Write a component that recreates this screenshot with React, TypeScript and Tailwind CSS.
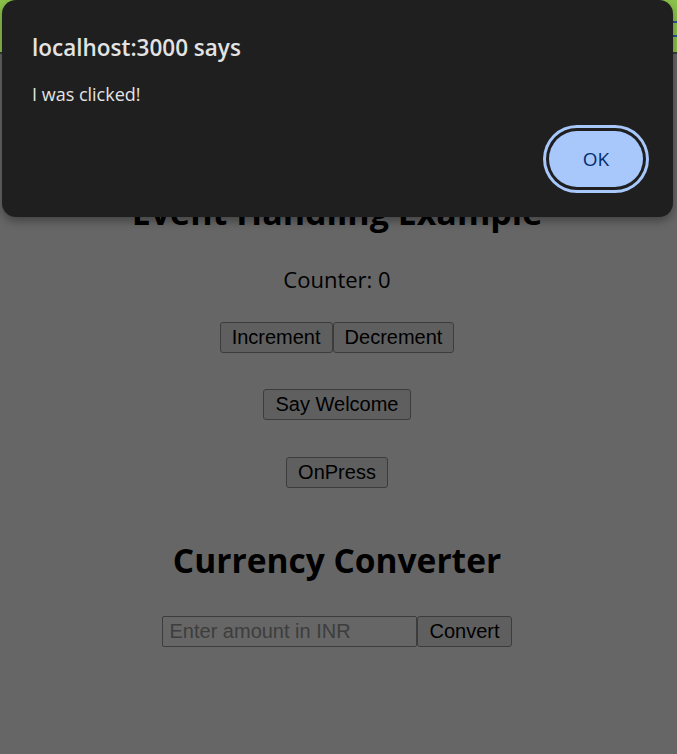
import React from "react";

const sys = { fontFamily: '"Open Sans", "Noto Sans", sans-serif' };
const arial = { fontFamily: '"Liberation Sans", Arial, sans-serif' };

function Btn({ children }: { children: React.ReactNode }) {
  return (
    <button
      className="h-[31px] px-[11px] border border-[#3c3c3c] rounded-[3px] bg-[#5f5f5f] text-black text-[20px] leading-[23px]"
      style={arial}
    >
      {children}
    </button>
  );
}

export default function App() {
  return (
    <div className="relative w-[677px] h-[754px] bg-[#666666] overflow-hidden">
      <div className="relative h-[54px] bg-[#8bc34a] border-b-2 border-[#3a3a3a]">
        <div className="absolute right-[-6px] top-[21px] w-[12px] h-[16px] border-y-2 border-[#2a4f9a]" />
      </div>

      <div className="w-[674px] text-center text-black" style={sys}>
        <h1 className="mt-[138px] text-[34px] leading-[40px] font-bold">Event Handling Example</h1>
        <p className="mt-[33px] text-[22px] leading-[28px]">Counter: 0</p>
        <div className="mt-[29px] flex justify-center">
          <Btn>Increment</Btn>
          <Btn>Decrement</Btn>
        </div>
        <div className="mt-[36px] flex justify-center">
          <Btn>Say Welcome</Btn>
        </div>
        <div className="mt-[37px] flex justify-center">
          <Btn>OnPress</Btn>
        </div>
        <h2 className="mt-[52px] text-[33.5px] leading-[40px] font-bold">Currency Converter</h2>
        <div className="mt-[36px] flex justify-center">
          <input
            placeholder="Enter amount in INR"
            className="w-[255px] h-[31px] px-[6px] border border-[#3c3c3c] rounded-[2px] bg-[#666666] text-[20px] placeholder:text-[#3d3d3d] outline-none"
            style={arial}
          />
          <Btn>Convert</Btn>
        </div>
      </div>

      <div
        className="absolute top-0 left-[2px] w-[671px] h-[217px] bg-[#1f1f1f] rounded-[14px] shadow-[0_4px_10px_rgba(0,0,0,0.35)] px-[30px]"
        style={sys}
      >
        <div className="pt-[33px] text-[22.5px] leading-[30px] font-semibold text-[#e3e3e3]">localhost:3000 says</div>
        <div className="mt-[19px] text-[18px] leading-[24px] text-[#e3e3e3]">I was clicked!</div>
        <div className="absolute right-[30px] top-[131px]">
          <button className="w-[94px] h-[56px] rounded-full bg-[#a8c7fa] text-[#062e6f] text-[19px] font-medium shadow-[0_0_0_3px_#1f1f1f,0_0_0_6px_#a8c7fa]">
            OK
          </button>
        </div>
      </div>
    </div>
  );
}
